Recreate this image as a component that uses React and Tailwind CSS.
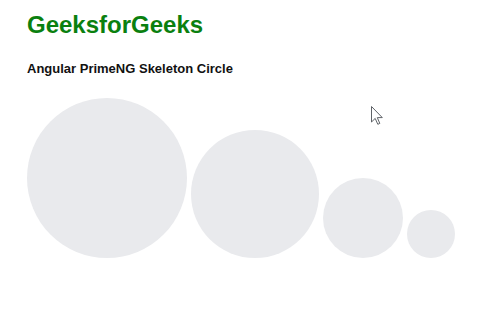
import React from "react";

export default function App() {
  return (
    <div className="relative w-[490px] h-[334px] bg-white px-[27px]" style={{ fontFamily: '"Liberation Sans", Arial, sans-serif' }}>
      <div className="pt-[11px] text-[24px] leading-[28px] font-bold text-[#0a800f]">GeeksforGeeks</div>
      <div className="mt-[22px] text-[13px] leading-[16px] font-bold text-[#111]">Angular PrimeNG Skeleton Circle</div>
      <div className="mt-[21px] flex items-end gap-1">
        <div className="w-[160px] h-[160px] rounded-full bg-[#e9eaed]" />
        <div className="w-[128px] h-[128px] rounded-full bg-[#e9eaed]" />
        <div className="w-[80px] h-[80px] rounded-full bg-[#e9eaed]" />
        <div className="w-[48px] h-[48px] rounded-full bg-[#e9eaed]" />
      </div>
      <svg className="absolute left-[371px] top-[106px]" width="13" height="20" viewBox="0 0 13 20">
        <path d="M0.5 0.5 L0.5 16 L4.2 12.4 L6.8 18.3 L8.8 17.4 L6.3 11.6 L11.3 11.6 Z" fill="#fff" stroke="#5f6368" strokeWidth="1" strokeLinejoin="round" />
      </svg>
    </div>
  );
}
